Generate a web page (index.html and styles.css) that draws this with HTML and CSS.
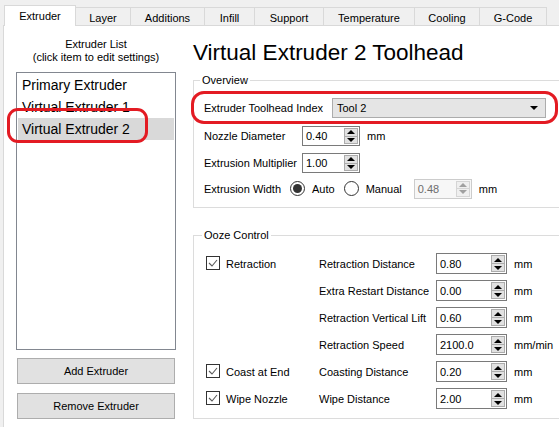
FILE: index.html
```html
<!DOCTYPE html>
<html>
<head>
<meta charset="utf-8">
<link rel="stylesheet" href="styles.css">
</head>
<body>
<div class="tabbar">
  <div class="tab active w-extruder">Extruder</div>
  <div class="tab w-layer">Layer</div>
  <div class="tab w-additions">Additions</div>
  <div class="tab w-infill">Infill</div>
  <div class="tab w-support">Support</div>
  <div class="tab w-temp">Temperature</div>
  <div class="tab w-cooling">Cooling</div>
  <div class="tab w-gcode">G-Code</div>
</div>
<div class="pane">
  <div class="leftcol">
    <div class="list-caption">Extruder List<br>(click item to edit settings)</div>
    <div class="listbox">
      <div class="item">Primary Extruder</div>
      <div class="item">Virtual Extruder 1</div>
      <div class="item selected">Virtual Extruder 2</div>
      <div class="mark mark-list"></div>
    </div>
    <div class="btn btn-add">Add Extruder</div>
    <div class="btn btn-remove">Remove Extruder</div>
  </div>
  <div class="rightcol">
    <h1 class="title">Virtual Extruder 2 Toolhead</h1>
    <fieldset class="group group-overview">
      <legend>Overview</legend>
      <div class="orow orow-combo">
        <span class="olabel w-combo-label">Extruder Toolhead Index</span>
        <div class="combo"><span>Tool 2</span><span class="combo-arrow"></span></div>
        <div class="mark mark-combo"></div>
      </div>
      <div class="orow orow-nozzle">
        <span class="olabel w-spin-label">Nozzle Diameter</span>
        <div class="spin spin-small"><span class="spin-val">0.40</span><div class="spin-btns"><span class="up"></span><span class="down"></span></div></div>
        <span class="unit">mm</span>
      </div>
      <div class="orow orow-mult">
        <span class="olabel w-spin-label">Extrusion Multiplier</span>
        <div class="spin spin-small"><span class="spin-val">1.00</span><div class="spin-btns"><span class="up"></span><span class="down"></span></div></div>
      </div>
      <div class="orow orow-width">
        <span class="olabel">Extrusion Width</span>
        <span class="radio checked"></span><span class="radio-label">Auto</span>
        <span class="radio"></span><span class="radio-label">Manual</span>
        <div class="spin spin-small disabled"><span class="spin-val">0.48</span><div class="spin-btns"><span class="up"></span><span class="down"></span></div></div>
        <span class="unit">mm</span>
      </div>
    </fieldset>
    <fieldset class="group group-ooze">
      <legend>Ooze Control</legend>
      <div class="zrow">
        <div class="zcheck"><span class="checkbox"><svg width="12" height="12" viewBox="0 0 12 12"><polyline points="2,6 5,9 10,3" fill="none" stroke="#5a5a5a" stroke-width="1.1"/></svg></span><span>Retraction</span></div>
        <span class="zlabel">Retraction Distance</span>
        <div class="spin spin-wide"><span class="spin-val">0.80</span><div class="spin-btns"><span class="up"></span><span class="down"></span></div></div>
        <span class="unit">mm</span>
      </div>
      <div class="zrow">
        <div class="zcheck"></div>
        <span class="zlabel">Extra Restart Distance</span>
        <div class="spin spin-wide"><span class="spin-val">0.00</span><div class="spin-btns"><span class="up"></span><span class="down"></span></div></div>
        <span class="unit">mm</span>
      </div>
      <div class="zrow">
        <div class="zcheck"></div>
        <span class="zlabel">Retraction Vertical Lift</span>
        <div class="spin spin-wide"><span class="spin-val">0.60</span><div class="spin-btns"><span class="up"></span><span class="down"></span></div></div>
        <span class="unit">mm</span>
      </div>
      <div class="zrow">
        <div class="zcheck"></div>
        <span class="zlabel">Retraction Speed</span>
        <div class="spin spin-wide"><span class="spin-val">2100.0</span><div class="spin-btns"><span class="up"></span><span class="down"></span></div></div>
        <span class="unit">mm/min</span>
      </div>
      <div class="zrow">
        <div class="zcheck"><span class="checkbox"><svg width="12" height="12" viewBox="0 0 12 12"><polyline points="2,6 5,9 10,3" fill="none" stroke="#5a5a5a" stroke-width="1.1"/></svg></span><span>Coast at End</span></div>
        <span class="zlabel">Coasting Distance</span>
        <div class="spin spin-wide"><span class="spin-val">0.20</span><div class="spin-btns"><span class="up"></span><span class="down"></span></div></div>
        <span class="unit">mm</span>
      </div>
      <div class="zrow">
        <div class="zcheck"><span class="checkbox"><svg width="12" height="12" viewBox="0 0 12 12"><polyline points="2,6 5,9 10,3" fill="none" stroke="#5a5a5a" stroke-width="1.1"/></svg></span><span>Wipe Nozzle</span></div>
        <span class="zlabel">Wipe Distance</span>
        <div class="spin spin-wide"><span class="spin-val">2.00</span><div class="spin-btns"><span class="up"></span><span class="down"></span></div></div>
        <span class="unit">mm</span>
      </div>
    </fieldset>
  </div>
</div>
</body>
</html>
```
FILE: styles.css
```css
html, body {
  margin: 0;
  padding: 0;
}
body {
  width: 559px;
  height: 427px;
  overflow: hidden;
  background: #f0f0f0;
  font-family: "Liberation Sans", Arial, sans-serif;
  font-size: 11px;
  color: #000;
}
.tabbar {
  display: flex;
  align-items: flex-end;
  height: 25px;
  padding-left: 4px;
}
.tab {
  box-sizing: border-box;
  height: 18px;
  border-top: 1px solid #d9d9d9;
  border-right: 1px solid #d9d9d9;
  background: #f0f0f0;
  display: flex;
  align-items: center;
  justify-content: center;
  padding-top: 2px;
}
.tab.active {
  height: 21px;
  margin-bottom: -1px;
  background: #fff;
  border-left: 1px solid #d9d9d9;
  position: relative;
  z-index: 1;
  padding-top: 0;
}
.w-extruder { width: 72px; }
.w-layer { width: 55px; }
.w-additions { width: 74px; }
.w-infill { width: 50px; }
.w-support { width: 69px; }
.w-temp { width: 91px; }
.w-cooling { width: 65px; }
.w-gcode { width: 67px; }

.pane {
  margin-left: 3px;
  height: 420px;
  border-left: 1px solid #d9d9d9;
  border-top: 1px solid #d9d9d9;
  background: #fff;
  display: flex;
  overflow: hidden;
}
.leftcol {
  width: 160px;
  flex: none;
  margin-left: 12px;
  padding-top: 12px;
  display: flex;
  flex-direction: column;
}
.list-caption {
  text-align: center;
  line-height: 13px;
}
.listbox {
  position: relative;
  box-sizing: border-box;
  margin-top: 8px;
  height: 278px;
  border: 1px solid #828790;
  padding: 1px;
}
.item {
  height: 22px;
  line-height: 22px;
  padding-left: 4px;
  font-size: 14px;
}
.item.selected {
  background: #d9d9d9;
}
.mark {
  position: absolute;
  box-sizing: border-box;
  border: 3px solid #e31b23;
  border-radius: 11px;
}
.mark-list {
  left: -10px;
  top: 35px;
  width: 141px;
  height: 35px;
}
.btn {
  box-sizing: border-box;
  margin: 0 1px;
  height: 26px;
  border: 1px solid #adadad;
  background: #e1e1e1;
  display: flex;
  align-items: center;
  justify-content: center;
}
.btn-add { margin-top: 8px; }
.btn-remove { margin-top: 9px; }

.rightcol {
  flex: none;
  width: 380px;
  margin-left: 17px;
}
.title {
  margin: 13px 0 0 0;
  font-size: 22.5px;
  line-height: 28px;
  font-weight: normal;
}
.group {
  margin: 0;
  border: 1px solid #dcdcdc;
  border-right: none;
  min-width: 0;
}
.group legend {
  margin-left: -4px;
  padding: 0 2px;
  line-height: 13px;
}
.group-overview {
  margin-top: 7px;
  padding: 11px 0 8px 10px;
}
.orow {
  display: flex;
  align-items: center;
}
.orow-combo {
  position: relative;
  height: 20px;
}
.orow-nozzle { margin-top: 8px; height: 20px; }
.orow-mult { margin-top: 7px; height: 20px; }
.orow-width { margin-top: 5px; height: 21px; }
.w-combo-label { width: 128px; flex: none; }
.w-spin-label { width: 98px; flex: none; }
.combo {
  box-sizing: border-box;
  width: 214px;
  height: 20px;
  border: 1px solid #acacac;
  background: #e5e5e5;
  display: flex;
  align-items: center;
  justify-content: space-between;
  padding: 0 7px 0 4px;
}
.combo-arrow {
  width: 0;
  height: 0;
  border-left: 4px solid transparent;
  border-right: 4px solid transparent;
  border-top: 4px solid #000;
}
.mark-combo {
  left: -13px;
  top: -7px;
  width: 367px;
  height: 33px;
  border-radius: 13px;
}
.spin {
  box-sizing: border-box;
  display: flex;
  align-items: center;
  justify-content: space-between;
  border: 1px solid #7a7a7a;
  background: #fff;
  padding: 0 1px 0 3px;
}
.spin-small { width: 58px; height: 20px; }
.spin-wide { width: 71px; height: 21px; }
.spin.disabled {
  border-color: #cccccc;
  background: #f7f7f7;
  color: #6d6d6d;
}
.spin-btns {
  box-sizing: border-box;
  width: 14px;
  height: calc(100% - 2px);
  border: 1px solid #acacac;
  background: #e1e1e1;
  display: flex;
  flex-direction: column;
}
.spin-btns span {
  flex: 1;
  display: flex;
  align-items: center;
  justify-content: center;
}
.spin-btns .up { border-bottom: 1px solid #acacac; }
.spin-btns .up::after {
  content: "";
  border-left: 4px solid transparent;
  border-right: 4px solid transparent;
  border-bottom: 4px solid #000;
}
.spin-btns .down::after {
  content: "";
  border-left: 4px solid transparent;
  border-right: 4px solid transparent;
  border-top: 4px solid #000;
}
.spin.disabled .spin-btns { border-color: #d5d5d5; background: #efefef; }
.spin.disabled .spin-btns .up { border-bottom-color: #d5d5d5; }
.spin.disabled .spin-btns .up::after { border-bottom-color: #a0a0a0; }
.spin.disabled .spin-btns .down::after { border-top-color: #a0a0a0; }
.unit { margin-left: 7px; }
.radio {
  box-sizing: border-box;
  width: 15px;
  height: 15px;
  border: 1px solid #333;
  border-radius: 50%;
  background: #fff;
  display: flex;
  align-items: center;
  justify-content: center;
  margin-left: 9px;
}
.radio.checked::after {
  content: "";
  width: 9px;
  height: 9px;
  border-radius: 50%;
  background: #333;
}
.radio + .radio-label { margin-left: 7px; }
.orow-width .spin { margin-left: 12px; }

.group-ooze {
  margin-top: 21px;
  padding: 11px 0 9px 12px;
  display: flex;
  flex-direction: column;
  gap: 6px;
}
.zrow {
  display: flex;
  align-items: center;
  height: 21px;
}
.zcheck {
  width: 113px;
  flex: none;
  display: flex;
  align-items: center;
  gap: 6px;
}
.checkbox {
  box-sizing: border-box;
  width: 14px;
  height: 14px;
  border: 1px solid #333;
  background: #fff;
  display: flex;
  align-items: center;
  justify-content: center;
  margin-bottom: 2px;
}
.zlabel { width: 117px; flex: none; }
```
